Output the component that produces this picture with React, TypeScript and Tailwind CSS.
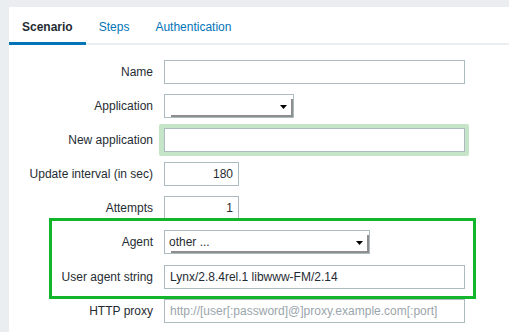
import React from "react";

const font = { fontFamily: '"Liberation Sans", Arial, sans-serif' };

function Label({ children }: { children: React.ReactNode }) {
  return (
    <div className="w-[144px] shrink-0 text-right text-[12px] leading-6 text-[#1f2c33]">
      {children}
    </div>
  );
}

function TextBox({ w, value, placeholder, right }: { w: string; value?: string; placeholder?: string; right?: boolean }) {
  return (
    <div
      className={`${w} h-6 border border-[#acbbc2] bg-white px-[5px] text-[12px] leading-[22px] ${right ? "text-right" : "text-left"} ${placeholder ? "text-[#9aa5ab]" : "text-[#1f2c33]"}`}
    >
      {value ?? placeholder ?? ""}
    </div>
  );
}

function Select({ w, value }: { w: string; value?: string }) {
  return (
    <div className={`${w} relative h-6 border border-[#acbbc2] bg-white`}>
      <div className="absolute left-[6px] bottom-0 right-0 h-[2px] bg-[#8e8e8e]" />
      <div className="absolute right-0 top-[4px] bottom-0 w-[2px] bg-[#8e8e8e]" />
      <div className="px-[4px] text-[12px] leading-[22px] text-[#1f2c33]">{value ?? ""}</div>
      <svg className="absolute right-[6px] top-[10px]" width="7" height="4" viewBox="0 0 7 4">
        <polygon points="0,0 7,0 3.5,4" fill="#000" />
      </svg>
    </div>
  );
}

function Row({ label, children, extra }: { label: string; children: React.ReactNode; extra?: string }) {
  return (
    <div className={`flex items-center gap-[11px] ${extra ?? ""}`}>
      <Label>{label}</Label>
      {children}
    </div>
  );
}

export default function App() {
  return (
    <div className="w-[509px] h-[332px] overflow-hidden bg-[#ebeef0] pt-[7px] pl-[9px]" style={font}>
      <div className="relative h-full bg-white">
        <div className="flex h-[38px] border-b-[2px] border-[#ebeef0] text-[12px]">
          <div className="flex items-center border-b-[3px] border-[#0275b8] px-[13px] pt-[5px] font-bold text-[#1f2c33] -mb-[2px]">
            Scenario
          </div>
          <div className="flex items-center px-[13px] pt-[3px] text-[#0275b8]">Steps</div>
          <div className="flex items-center px-[13px] pt-[3px] text-[#0275b8]">Authentication</div>
        </div>

        <div className="flex flex-col gap-[10px] pt-[15px]">
          <Row label="Name">
            <TextBox w="w-[301px]" />
          </Row>
          <Row label="Application">
            <Select w="w-[130px]" />
          </Row>
          <Row label="New application">
            <div className="-m-[4px] -ml-[5px] rounded-[2px] bg-[#c6e4c8] p-[4px] pl-[5px]">
              <TextBox w="w-[301px]" />
            </div>
          </Row>
          <Row label="Update interval (in sec)">
            <TextBox w="w-[75px]" value="180" right />
          </Row>
          <Row label="Attempts">
            <TextBox w="w-[75px]" value="1" right />
          </Row>
          <Row label="Agent">
            <Select w="w-[206px]" value="other ..." />
          </Row>
          <Row label="User agent string" extra="mt-px">
            <TextBox w="w-[301px]" value="Lynx/2.8.4rel.1 libwww-FM/2.14" />
          </Row>
          <Row label="HTTP proxy">
            <TextBox w="w-[301px]" placeholder="http://[user[:password]@]proxy.example.com[:port]" />
          </Row>
        </div>

        <div className="pointer-events-none absolute left-[40px] top-[211px] h-[81px] w-[427px] border-[3px] border-[#13b52b]" />
      </div>
    </div>
  );
}
